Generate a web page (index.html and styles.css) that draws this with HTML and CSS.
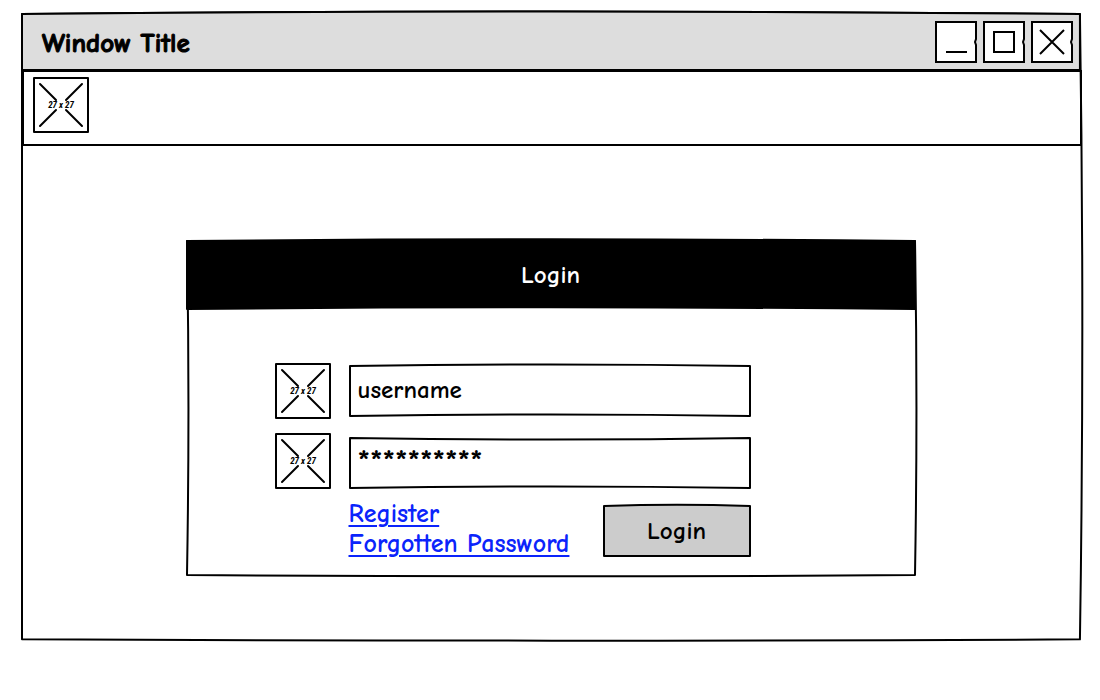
FILE: index.html
```html
<!DOCTYPE html>
<html lang="en">
<head>
<meta charset="utf-8">
<meta name="viewport" content="width=device-width, initial-scale=1">
<title>Window Title</title>
<link rel="stylesheet" href="styles.css">
</head>
<body>
<div class="window sketch">
  <svg class="outline" viewBox="0 0 100 100" preserveAspectRatio="none" aria-hidden="true"><path d="M0 0Q50 -.8 99.900 0Q100.35 50 99.900 99.900Q50 100.300 0 99.900Z"/></svg>
  <header class="titlebar sketch">
    <svg class="outline gray-light" viewBox="0 0 100 100" preserveAspectRatio="none" aria-hidden="true"><path d="M0 0Q50 -9 99.900 0V100H0Z"/></svg>
    <h1 class="title">Window Title</h1>
    <div class="controls">
      <button class="control" type="button" aria-label="Minimize"><svg viewBox="0 0 42 42"><path d="M1 1H41V18L40 21L41 24V41H1ZM11 31H32"/></svg></button>
      <button class="control" type="button" aria-label="Maximize"><svg viewBox="0 0 42 42"><path d="M1 1H41V18L40 21L41 24V41H1ZM11 11H31V31H11Z"/></svg></button>
      <button class="control" type="button" aria-label="Close"><svg viewBox="0 0 42 42"><path d="M1 1H41V18L40 21L41 24V41H1ZM9 9 33 33M33 9 9 33"/></svg></button>
    </div>
  </header>
  <div class="toolbar">
    <svg class="picture" viewBox="0 0 56 56"><path d="M1 1H55V55H1ZM7 7 23 23M33 23 49 7M7 49 23 33M33 33 49 49"/><text x="28" y="31">27 x 27</text></svg>
  </div>
  <main class="content">
    <section class="dialog sketch">
      <svg class="outline" viewBox="0 0 100 100" preserveAspectRatio="none" aria-hidden="true"><path d="M0 0H100Q100.400 50 100 100Q50 100.800 0 100Q.4 50 0 0Z"/></svg>
      <div class="dialog-head sketch">
        <svg class="outline black" viewBox="0 0 100 100" preserveAspectRatio="none" aria-hidden="true"><path d="M0 0Q50 -5 100 0V100Q50 95 0 100Z"/></svg>
        <h2 class="dialog-title">Login</h2>
      </div>
      <form class="form">
        <svg class="picture" viewBox="0 0 56 56"><path d="M1 1H55V55H1ZM7 7 23 23M33 23 49 7M7 49 23 33M33 33 49 49"/><text x="28" y="31">27 x 27</text></svg>
        <div class="field sketch">
          <svg class="outline" viewBox="0 0 100 100" preserveAspectRatio="none" aria-hidden="true"><path d="M0 0Q50 -6 100 0V100Q50 94 0 100Z"/></svg>
          <input class="input" type="text" aria-label="Username" value="username">
        </div>
        <svg class="picture" viewBox="0 0 56 56"><path d="M1 1H55V55H1ZM7 7 23 23M33 23 49 7M7 49 23 33M33 33 49 49"/><text x="28" y="31">27 x 27</text></svg>
        <div class="field sketch">
          <svg class="outline" viewBox="0 0 100 100" preserveAspectRatio="none" aria-hidden="true"><path d="M0 0Q50 6 100 0V100Q50 94 0 100Z"/></svg>
          <input class="input masked" type="text" aria-label="Password" value="**********">
        </div>
        <div class="actions">
          <nav class="links">
            <a href="#register">Register</a>
            <a href="#forgotten">Forgotten Password</a>
          </nav>
          <button class="submit sketch" type="submit">
            <svg class="outline gray" viewBox="0 0 100 100" preserveAspectRatio="none" aria-hidden="true"><path d="M0 0Q50 -5 100 0V100H0Z"/></svg>
            <span class="label">Login</span>
          </button>
        </div>
      </form>
    </section>
  </main>
</div>
</body>
</html>
```
FILE: styles.css
```css
* { box-sizing: border-box; }

body {
  margin: 0;
  padding: 13px 18px 32px 21px;
  background: #fff;
  color: #000;
  font: 700 25px/30px "Comic Sans MS", "Comic Neue", Lato, sans-serif;
}

/* Hand-drawn outlines stretch with the box they surround. */
.sketch { position: relative; isolation: isolate; }

.outline {
  position: absolute;
  inset: 1px;
  z-index: -1;
  width: calc(100% - 2px);
  height: calc(100% - 2px);
  overflow: visible;
  pointer-events: none;
}

.outline path {
  fill: #fff;
  stroke: #000;
  stroke-width: 2px;
  stroke-linejoin: round;
  vector-effect: non-scaling-stroke;
}

.gray-light path { fill: #ddd; }
.gray path { fill: #ccc; }
.black path { fill: #000; }

.titlebar {
  display: flex;
  align-items: center;
  justify-content: space-between;
  padding: 8px 9px 8px 21px;
}

.title, .dialog-title { margin: 0; line-height: 30px; }
.title { padding-top: 4px; font-size: 27px; -webkit-text-stroke: 1px #000; }
.dialog-title { font-size: 25px; }

.controls { display: flex; gap: 6px; }

.control {
  width: 42px;
  height: 42px;
  padding: 0;
  border: 0;
  background: none;
}

.control svg {
  display: block;
  width: 100%;
  fill: #fff;
  stroke: #000;
  stroke-width: 2px;
}

.toolbar {
  margin: -1px 0 0 1px;
  padding: 5px 9px 11px;
  border: 2px solid #000;
}

.picture { display: block; width: 56px; height: 56px; }

.picture path {
  fill: #fff;
  stroke: #000;
  stroke-width: 2px;
  stroke-linecap: round;
  stroke-linejoin: round;
}

.picture text {
  font: italic 700 9px "Roboto Condensed", Roboto, sans-serif;
  text-anchor: middle;
}

.content { padding: 94px 26px 65px 24px; }

.dialog { max-width: 730px; margin: 0 auto; }

.dialog-head {
  padding: 20px;
  color: #fff;
  text-align: center;
}

.form {
  display: grid;
  grid-template-columns: 56px 1fr;
  column-gap: 18px;
  padding: 53px 165px 17px 89px;
}

.field { align-self: center; height: 52px; }
.picture + .field ~ .picture { margin-top: 14px; }
.field ~ .field { align-self: end; }

.input {
  width: 100%;
  height: 100%;
  padding: 0 9px 4px;
  border: 0;
  outline: 0;
  background: none;
  color: inherit;
  font: inherit;
}

.masked { font-size: 33px; }

.actions {
  grid-column: 2;
  display: flex;
  align-items: center;
  justify-content: space-between;
  margin-top: 10px;
}

.links { display: grid; justify-items: start; font-size: 26px; }
.links a { color: #0b24fb; text-underline-offset: 3px; text-decoration-thickness: 2px; }

.submit {
  width: 148px;
  height: 52px;
  margin-top: 4px;
  padding: 0;
  border: 0;
  background: none;
  color: inherit;
  font: inherit;
}
```
